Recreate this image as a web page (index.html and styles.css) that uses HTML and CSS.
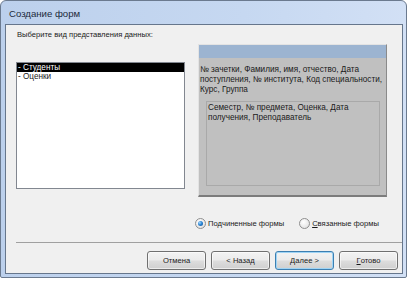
FILE: index.html
```html
<!DOCTYPE html>
<html lang="ru">
<head>
<meta charset="utf-8">
<title>Создание форм</title>
<link rel="stylesheet" href="styles.css">
</head>
<body>
<div class="window">
  <div class="titlebar">Создание форм</div>
  <div class="client">
    <div class="main">
      <div class="left">
        <div class="prompt">Выберите вид представления данных:</div>
        <div class="list">
          <div class="item sel">- Студенты</div>
          <div class="item">- Оценки</div>
        </div>
      </div>
      <div class="preview">
        <div class="phead"></div>
        <div class="ptext">№ зачетки, Фамилия, имя, отчество, Дата поступления, № института, Код специальности, Курс, Группа</div>
        <div class="sub">Семестр, № предмета, Оценка, Дата получения, Преподаватель</div>
      </div>
    </div>
    <div class="radios">
      <div class="radio"><span class="dot on"></span><span>Подчиненные формы</span></div>
      <div class="radio"><span class="dot"></span><span><u>С</u>вязанные формы</span></div>
    </div>
    <div class="sep"></div>
    <div class="buttons">
      <div class="btn">Отмена</div>
      <div class="btn">&lt; Назад</div>
      <div class="btn def"><u>Д</u>алее &gt;</div>
      <div class="btn"><u>Г</u>отово</div>
    </div>
  </div>
</div>
</body>
</html>
```
FILE: styles.css
```css
html, body {
  margin: 0;
  padding: 0;
  background: #ffffff;
}
body {
  font-family: "Liberation Sans", Arial, sans-serif;
  font-size: 8px;
  color: #1a1a1a;
}
.window {
  width: 407px;
  height: 278px;
  box-sizing: border-box;
  border: 1px solid #6b7a8f;
  border-radius: 6px 6px 2px 2px;
  background: linear-gradient(to right, #bcd0ec 0%, #c6d8f1 60%, #d2e0f5 100%);
  padding: 0 3px 3px 4px;
  display: flex;
  flex-direction: column;
}
.titlebar {
  height: 23px;
  box-sizing: border-box;
  padding: 5px 0 0 4px;
  font-size: 9.6px;
  line-height: 16px;
  color: #1c2a3c;
}
.client {
  flex: 1;
  border: 1px solid #66768c;
  background: #f0f0f0;
  padding-top: 5px;
  display: flex;
  flex-direction: column;
}
.main {
  display: flex;
  align-items: flex-start;
}
.left {
  margin-left: 10px;
  width: 169px;
}
.prompt {
  font-size: 7.6px;
  line-height: 10px;
  padding-left: 1px;
}
.list {
  margin-top: 22px;
  height: 127px;
  box-sizing: border-box;
  border: 1px solid #828790;
  background: #ffffff;
}
.item {
  height: 9px;
  line-height: 9px;
  padding-left: 1px;
  white-space: pre;
  font-size: 8.2px;
}
.item.sel {
  background: #000000;
  color: #ffffff;
}
.preview {
  margin-left: 13px;
  margin-top: 14px;
  width: 189px;
  height: 153px;
  box-sizing: border-box;
  background: #c0c0c0;
  border-top: 1px solid #e3e3e3;
  border-left: 1px solid #e3e3e3;
  border-right: 1px solid #8a8a8a;
  border-bottom: 2px solid #7c7c7c;
  font-size: 8.2px;
}
.phead {
  height: 13px;
  background: #9cb4d1;
}
.ptext {
  padding: 7px 0 0 1px;
  line-height: 10px;
}
.sub {
  margin: 6px 6px 0 7px;
  height: 85px;
  box-sizing: border-box;
  border: 1px solid #a9a9a9;
  padding: 1px 2px 0 1px;
  line-height: 10px;
}
.radios {
  display: flex;
  gap: 15px;
  margin-top: 20px;
  margin-left: 189px;
  height: 12px;
  align-items: center;
  font-size: 7.6px;
}
.radio {
  display: flex;
  align-items: center;
  gap: 2px;
}
.dot {
  width: 11px;
  height: 11px;
  box-sizing: border-box;
  border-radius: 50%;
  border: 1px solid #8f8f8f;
  background: radial-gradient(circle at 40% 35%, #ffffff 0%, #e6e6e6 70%, #d4d4d4 100%);
  display: flex;
  align-items: center;
  justify-content: center;
}
.dot.on::after {
  content: "";
  width: 5px;
  height: 5px;
  border-radius: 50%;
  background: radial-gradient(circle at 35% 35%, #a7d8ff 0%, #2b86d4 45%, #0d4f94 100%);
}
.sep {
  margin-top: 13px;
  margin-left: 10px;
  height: 1px;
  background: #a0a0a0;
}
.buttons {
  display: flex;
  justify-content: flex-end;
  gap: 5px;
  margin-top: 8px;
  padding-right: 4px;
  font-size: 7.6px;
}
.btn {
  width: 59px;
  height: 19px;
  box-sizing: border-box;
  border: 1px solid #707070;
  border-radius: 3px;
  background: linear-gradient(to bottom, #f3f3f3 0%, #ebebeb 48%, #dddddd 52%, #cfcfcf 100%);
  display: flex;
  align-items: center;
  justify-content: center;
  line-height: 10px;
  box-shadow: inset 0 0 0 1px rgba(255, 255, 255, 0.6);
}
.btn.def {
  border-color: #3c7fb1;
  box-shadow: inset 0 0 0 1px #9fd4f5;
}
u {
  text-decoration: underline;
  text-underline-offset: 1px;
}
```
